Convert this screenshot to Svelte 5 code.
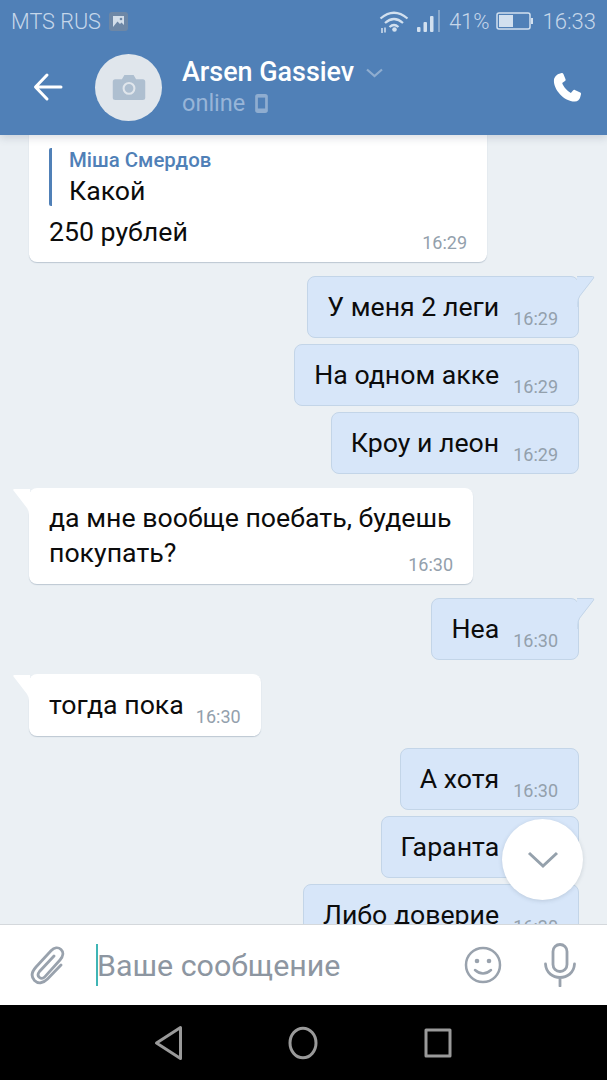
<script>
  const outgoingA = [
    { text: 'У меня 2 леги', time: '16:29', tail: true },
    { text: 'На одном акке', time: '16:29' },
    { text: 'Кроу и леон', time: '16:29' }
  ];
  const outgoingB = [
    { text: 'А хотя', time: '16:30' },
    { text: 'Гаранта', time: '16:30' },
    { text: 'Либо доверие', time: '16:30' }
  ];
</script>

{#snippet outTail()}
  <svg class="tail tail-out" width="18" height="32" viewBox="0 0 18 32"><path d="M0 1H15.5Q17.5 1 16.5 2.5L3 20Q1 23 1 27V31H0Z" fill="#d7e6f9"/><path d="M0 .5H15.5Q17.5 .5 16.5 2.2L2.7 20Q.8 23 .8 27V31" fill="none" stroke="#c3d5e8" stroke-width="1"/></svg>
{/snippet}
{#snippet inTail()}
  <svg class="tail tail-in" width="18" height="32" viewBox="0 0 18 32"><path d="M18 1H2.5Q.5 1 1.5 2.5L15 20Q17 23 17 27V31H18Z" fill="#fff"/></svg>
{/snippet}
{#snippet outBubble(m)}
  <div class="bubble out">
    {#if m.tail}{@render outTail()}{/if}
    <span class="text">{m.text}</span><span class="time">{m.time}</span>
  </div>
{/snippet}

<div class="screen">
  <header class="header">
    <div class="status">
      <div class="carrier">
        <span>MTS RUS</span>
        <svg width="19" height="19" viewBox="0 0 19 19"><rect width="19" height="19" rx="3" fill="#6d87a6"/><rect x="4" y="4" width="11" height="11" fill="#d3deea"/><path d="M4 15 8.500 9.500 11 12 12.500 10.500 15 13V15Z" fill="#6d87a6"/><circle cx="12" cy="7" r="1.300" fill="#6d87a6"/></svg>
      </div>
      <div class="sys">
        <svg width="30" height="24" viewBox="0 0 30 24" fill="none" stroke="#d2e0ef" stroke-width="2.200"><path d="M1.500 9.500Q15-2 28.500 9.500"/><path d="M6 14Q15 6 24 14"/><path d="M10.500 18Q15 14 19.500 18"/><circle cx="15.500" cy="20.500" r="2.300" fill="#d2e0ef" stroke="none"/><path d="M3 19v5M6 18.500v5" stroke-width="1.500"/></svg>
        <svg class="signal" width="24" height="24" viewBox="0 0 24 24" fill="#d2e0ef"><rect x="0" y="18" width="3.500" height="5" rx="1"/><rect x="6.500" y="13" width="3.500" height="10" rx="1"/><rect x="13" y="7" width="3.500" height="16" rx="1"/><rect x="21" y="1" width="2" height="22" fill="#87a7cb"/></svg>
        <span class="pct">41%</span>
        <svg class="batt" width="38" height="20" viewBox="0 0 38 20"><rect x="1" y="2" width="33" height="16" rx="2" fill="none" stroke="#d2e0ef" stroke-width="1.500"/><rect x="3" y="4" width="14" height="12" fill="#d2e0ef"/><rect x="35" y="7" width="2" height="6" fill="#d2e0ef"/></svg>
        <span class="clock">16:33</span>
      </div>
    </div>
    <div class="bar">
      <svg class="back" width="30" height="30" viewBox="0 0 30 30" fill="none" stroke="#fff" stroke-width="3" stroke-linecap="round" stroke-linejoin="round"><path d="M28 15H3M14 3 2.500 15 14 27"/></svg>
      <div class="avatar">
        <svg width="34" height="25" viewBox="0 0 39 30"><path d="M3 5H11L14 0H25L28 5H36Q39 5 39 8V27Q39 30 36 30H3Q0 30 0 27V8Q0 5 3 5Z" fill="#aebfd0"/><circle cx="19.500" cy="16" r="6.500" fill="none" stroke="#e0e6ec" stroke-width="2.500"/></svg>
      </div>
      <div class="who">
        <div class="name">Arsen Gassiev <svg width="17" height="10" viewBox="0 0 17 10" fill="none" stroke="#8fadd0" stroke-width="2.200"><path d="M1 1.500 8.500 8 16 1.500"/></svg></div>
        <div class="online">online <svg width="13" height="19" viewBox="0 0 14 21"><rect width="14" height="21" rx="3" fill="#8fadd0"/><rect x="3" y="4" width="8" height="12" fill="#5080b7"/></svg></div>
      </div>
      <svg class="call" width="32" height="32" viewBox="0 0 24 24" fill="#fff"><path d="M6.200 1.300 8 .8c.6-.1 1.100.2 1.300.7l1.600 4c.2.500 0 1-.4 1.300L8.400 8.300c.9 2.800 3.500 5.900 6.500 7.400l1.600-1.900c.4-.4.900-.5 1.400-.3l4 1.900c.5.200.8.800.6 1.300l-.6 2.300c-.3 1.500-1.900 3.200-4 3.200C9.500 21.900 1.800 12.900 2.200 6.100c.1-2.200 2.300-4.400 4-4.800Z"/></svg>
    </div>
  </header>

  <main class="chat">
    <div class="bubble in first">
      <div class="quote">
        <div class="qname">Міша Смердов</div>
        <div class="text">Какой</div>
      </div>
      <div class="text">250 рублей</div>
      <span class="time corner">16:29</span>
    </div>

    <div class="group">
      {#each outgoingA as m}{@render outBubble(m)}{/each}
    </div>

    <div class="bubble in wide">
      {@render inTail()}
      <div class="text">да мне вообще поебать, будешь<br />покупать?</div>
      <span class="time corner">16:30</span>
    </div>

    <div class="group">
      <div class="bubble out">
        {@render outTail()}
        <span class="text">Неа</span><span class="time">16:30</span>
      </div>
    </div>

    <div class="bubble in short">
      {@render inTail()}
      <span class="text">тогда пока</span><span class="time">16:30</span>
    </div>

    <div class="group tight">
      {#each outgoingB as m}{@render outBubble(m)}{/each}
    </div>

    <button class="down" aria-label="Вниз">
      <svg width="32" height="18" viewBox="0 0 32 18" fill="none" stroke="#95a1ac" stroke-width="3"><path d="M2 2 16 15 30 2"/></svg>
    </button>
  </main>

  <footer class="composer">
    <svg class="clip" width="36" height="40" viewBox="0 0 36 40" fill="none" stroke="#99a2ad" stroke-width="2.800" stroke-linecap="round"><path d="M24 11 9.500 26.500c-2 2.500-1.500 4.800 0 6 1.700 1.300 3.800.9 5.500-.9L30 15c3.500-4 3.700-8 1-10.500-2.800-2.600-6.800-2.200-10 1.200L6 22c-4.500 5-4.800 10-1.500 13.500 3.500 3.500 8.500 3 13-1.500L31 20"/></svg>
    <div class="input"><i class="caret"></i><span class="placeholder">Ваше сообщение</span></div>
    <svg class="smile" width="38" height="38" viewBox="0 0 38 38" fill="none" stroke="#99a2ad" stroke-width="2.500"><circle cx="19" cy="19" r="17"/><circle cx="13" cy="15" r="2.300" fill="#99a2ad" stroke="none"/><circle cx="25" cy="15" r="2.300" fill="#99a2ad" stroke="none"/><path d="M11 24Q19 31 27 24" stroke-linecap="round"/></svg>
    <svg class="mic" width="32" height="44" viewBox="0 0 32 44" fill="none" stroke="#99a2ad" stroke-width="2.800" stroke-linecap="round"><rect x="9" y="1.500" width="14" height="27" rx="7"/><path d="M1.500 21C2 30 9 34.500 16 34.500S30 30 30.500 21M16 35V43"/></svg>
  </footer>

  <nav class="nav">
    <svg width="30" height="36" viewBox="0 0 30 36" fill="none" stroke="#9a9a9a" stroke-width="3" stroke-linejoin="round"><path d="M26.500 2.500V33.500L2.500 18Z"/></svg>
    <svg width="30" height="34" viewBox="0 0 30 34" fill="none" stroke="#9a9a9a" stroke-width="3"><ellipse cx="15" cy="17" rx="13" ry="14.800"/></svg>
    <svg class="sq" width="28" height="32" viewBox="0 0 28 32" fill="none" stroke="#9a9a9a" stroke-width="3" stroke-linejoin="round"><rect x="2" y="3" width="24" height="26"/></svg>
  </nav>
</div>

<style>
  :global(body) { margin: 0; }
  .screen {
    width: 607px;
    height: 1080px;
    display: flex;
    flex-direction: column;
    overflow: hidden;
    font-family: Roboto, "Liberation Sans", sans-serif;
    background: #ebf0f4;
  }
  .header {
    height: 135px;
    flex: none;
    background: #5080b7;
    position: relative;
    z-index: 2;
    box-shadow: 0 3px 8px rgba(60, 80, 100, .18);
  }
  .status {
    height: 42px;
    display: flex;
    justify-content: space-between;
    align-items: center;
    padding: 0 11px;
    color: #c6d7ea;
    font-size: 22px;
    font-weight: 300;
  }
  .carrier { display: flex; align-items: center; gap: 8px; }
  .carrier span { font-size: 21.600px; }
  .sys { display: flex; align-items: center; }
  .signal { margin-left: 8px; }
  .pct { margin-left: 8px; }
  .batt { margin-left: 6px; }
  .clock { margin-left: 9px; }
  .bar {
    display: flex;
    align-items: flex-start;
    height: 93px;
  }
  .back { margin: 30px 0 0 33px; }
  .avatar {
    width: 67px;
    height: 67px;
    margin: 12px 0 0 32px;
    border-radius: 50%;
    background: #e0e6ec;
    display: grid;
    place-items: center;
  }
  .who { margin: 14px 0 0 20px; flex: 1; }
  .name {
    color: #fff;
    font-size: 26.900px;
    font-weight: 500;
    line-height: 33px;
  }
  .name svg { margin: 0 0 3px 5px; }
  .online {
    color: #98b5d8;
    font-size: 23.500px;
    line-height: 30px;
    margin-top: -1px;
    display: flex;
    align-items: center;
    gap: 10px;
  }
  .call { margin: 30px 24px 0 0; }

  .chat {
    flex: 1;
    min-height: 0;
    position: relative;
    display: flex;
    flex-direction: column;
    gap: 14px;
    padding: 0 28px 0 29px;
    overflow: hidden;
  }
  .group { display: flex; flex-direction: column; gap: 6px; align-items: flex-end; }
  .tight { margin-top: -2px; }
  .bubble {
    position: relative;
    box-sizing: border-box;
    border-radius: 8px;
    padding: 13px 20px;
    font-size: 26.700px;
    line-height: 35px;
    color: #0c0c0c;
    flex: none;
  }
  .in {
    background: #fff;
    align-self: flex-start;
    box-shadow: 0 1px 1px rgba(120, 140, 160, .4);
  }
  .out {
    background: #d7e6f9;
    border: 1px solid #c3d5e8;
    display: flex;
    align-items: flex-end;
    gap: 14px;
    height: 62px;
    padding: 12px 20px 12px 19px;
  }
  .time {
    color: #93a0ac;
    font-size: 18px;
    line-height: 21px;
    margin-bottom: -4px;
    flex: none;
  }
  .corner { display: block; text-align: right; margin: -17px 0 0; }
  .tail { position: absolute; top: -1px; }
  .tail-out { right: -17px; }
  .tail-in { left: -17px; top: 0; }
  .first {
    width: 458px;
    margin-top: -16px;
    padding-top: 29px;
    height: 143px;
  }
  .quote {
    border-left: 3px solid #5080b7;
    padding-left: 17px;
    height: 58px;
    margin-bottom: 9px;
    border-radius: 2px;
  }
  .qname {
    color: #5080b7;
    font-size: 20.400px;
    font-weight: 500;
    line-height: 24px;
  }
  .quote .text { line-height: 39px; }
  .first .corner { margin-top: -18px; }
  .wide { width: 444px; height: 96px; }
  .short {
    display: flex;
    align-items: flex-end;
    gap: 12px;
    height: 62px;
  }
  .down {
    position: absolute;
    right: 24px;
    top: 684px;
    width: 81px;
    height: 81px;
    border: 0;
    padding: 0;
    border-radius: 50%;
    background: #fff;
    box-shadow: 0 1px 4px rgba(70, 90, 110, .2);
    display: grid;
    place-items: center;
  }

  .composer {
    height: 81px;
    flex: none;
    box-sizing: border-box;
    background: #fff;
    border-top: 1px solid #d4d8dc;
    display: flex;
    align-items: center;
    position: relative;
    z-index: 1;
  }
  .clip { margin-left: 30px; flex: none; }
  .input {
    flex: 1;
    margin-left: 30px;
    display: flex;
    align-items: center;
    color: #8d96a1;
    font-size: 30.400px;
  }
  .placeholder { margin: 1px 0 0 -1px; }
  .caret { width: 2px; height: 42px; background: #3fb5b5; flex: none; }
  .smile { margin-right: 42px; }
  .mic { margin-right: 31px; }
  .nav {
    height: 75px;
    flex: none;
    background: #000;
    display: flex;
    align-items: center;
    gap: 104px;
    padding-left: 154px;
  }
  .sq { margin-left: 2px; }
</style>
